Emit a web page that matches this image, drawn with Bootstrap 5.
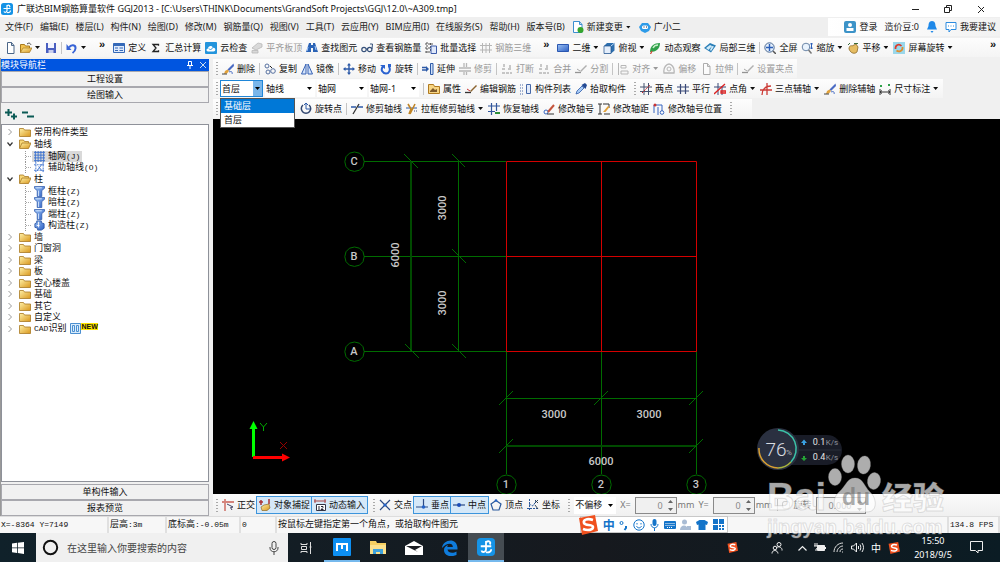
<!DOCTYPE html>
<html lang="zh-CN">
<head>
<meta charset="utf-8">
<meta name="viewport" content="width=device-width, initial-scale=1">
<title>广联达BIM钢筋算量软件 GGJ2013</title>
<link href="https://cdn.jsdelivr.net/npm/bootstrap@5.3.0/dist/css/bootstrap.min.css" rel="stylesheet">
<style>
body{font:9px/12px "Noto Sans","Noto Sans CJK SC",sans-serif;color:#111;background:#f0f0f0;overflow:hidden}
svg{flex:none;display:block}
.ico{width:12px;height:12px}
.titlebar{height:17px;background:#fff;padding:0 16px 0 1px}
.menubar{height:20px;background:#efefef;padding-left:5px;gap:7px}
.menubar a{color:#222;text-decoration:none;white-space:nowrap}
.account{background:linear-gradient(90deg,#fff,#f2f2f2);gap:7px;height:18px;padding:0 4px 0 16px}
.tool{--bs-btn-padding-x:0px;--bs-btn-padding-y:0px;--bs-btn-font-size:9px;--bs-btn-line-height:12px;--bs-btn-border-width:0px;--bs-btn-border-radius:0;--bs-btn-color:#111;display:inline-flex;align-items:center;gap:3px;white-space:nowrap;flex:none}
.tool:disabled{--bs-btn-disabled-color:#999;--bs-btn-disabled-opacity:1}
.tool:disabled svg{filter:grayscale(1);opacity:.5}
.dd::after{content:"";width:5px;height:3px;margin-right:1px;background:#111;clip-path:polygon(0 0,100% 0,50% 100%)}
.dd:disabled::after{background:#999}
.toprow{height:21px}
.strip{height:19px;display:flex;align-items:center;gap:4px;padding:0 4px;background:linear-gradient(#fdfdfd,#f4f4f4)}
.rule{width:1px;height:12px;background:#c4c4c4;flex:none}
.grip{width:2px;height:13px;background:repeating-linear-gradient(#aaa 0 1px,transparent 1px 3px);flex:none}
.more{font:bold 11px/11px "Liberation Sans",sans-serif;align-self:flex-start;padding-top:1px}
.main-top{height:20px;background:#f0f0f0}
.main-top .strip{padding-left:3px}
.main-top .rule+.tool,.main-top .combos+.rule{margin-left:0}
.combos{display:flex;gap:2px;margin-left:-2px}
.side{width:209px;flex:none;background:#f0f0f0;border-left:1px solid #999;padding-top:1px}
.side-head{background:#0055e0;color:#fff;height:12px;line-height:12px;padding-right:2px;gap:5px}
.pane-btn{--bs-btn-padding-y:0px;--bs-btn-font-size:9px;--bs-btn-line-height:14px;--bs-btn-border-radius:0;--bs-btn-border-color:#a8a8ae;--bs-btn-bg:#f1f1f1;--bs-btn-color:#111;height:16px}
.pane-tools{height:21px;padding-left:4px}
.tree{background:#fff;border:1px solid #8e9199;margin-bottom:2px}
.tree-in,.tree-in ul{list-style:none;margin:0;padding:0}
.tree-in{padding:1px 0 0 5px}
.node{display:flex;align-items:center;gap:4px;height:12px}
.node .fold{margin-left:2px;margin-right:-1px}
.tree-in>li:nth-child(n+4):nth-child(even)>.node{height:11px}
.tree-in .kids{margin-left:18px}
.kids li{display:flex;height:12px;align-items:center}
.kids li:nth-child(even){height:11px}
.kids .hit{display:flex;gap:3px;align-items:center;padding:0 2px;height:11px}
.kids .on{background:#d9d9d9}
.kids li::before{content:"";width:7px;height:11px;border-left:1px dotted #999;background:repeating-linear-gradient(90deg,#aaa 0 1px,transparent 1px 2px) 0 5px/8px 1px no-repeat}
.en{font:8px/12px "Liberation Mono",monospace}
.newtag{font:bold 7px/7px "Liberation Sans",sans-serif;background:#ffe600;align-self:flex-start;margin-left:-4px}
.combo{appearance:none;border:0;border-radius:0;height:17px;width:50px;padding:0 10px 0 1px;font:inherit;color:#111;flex:none;background:#fff url("data:image/svg+xml,%3Csvg xmlns='http://www.w3.org/2000/svg' width='5' height='3'%3E%3Cpath d='M0 0h5L2.500 3z'/%3E%3C/svg%3E") right 3px center no-repeat}
.snap-mode{width:42px}
.floor{width:43px;border:1px solid #1f86d8;background-color:#7ab6ea;background-image:url("data:image/svg+xml,%3Csvg xmlns='http://www.w3.org/2000/svg' width='43' height='17'%3E%3Cpath fill='white' d='M0 0h32v17H0z'/%3E%3Cpath d='M34 6h5l-2.500 3z'/%3E%3C/svg%3E");background-position:0 0}
.floor-box{position:relative;display:flex}
.floor-list{position:absolute;left:0;top:18px;width:75px;z-index:5;background:#fff;border:1px solid #555;list-style:none;margin:0;padding:0}
.floor-list li{height:14px;line-height:14px;padding-left:3px}
.floor-list .sel{background:#0078d7;color:#fff}
.after-list{margin-left:78px}
.work{min-width:0;margin-left:4px;padding-top:1px}
.cad{background:#000;min-height:0;position:relative}
.cad text{font:500 11px Roboto,sans-serif;fill:#c8c8c8;text-anchor:middle}
.cad .plan{position:absolute}
.snap{height:22px;display:flex;align-items:center;gap:4px;padding:0 3px;background:linear-gradient(#fbfbfb,#f0f0f0)}
.snap-set{display:flex;margin:0 -2px}
.pressed{background:#d5e8f8;outline:1px solid #3d95dc;height:16px;padding:0 2px}
.num{width:42px;height:17px;border:1px solid #8a8a8a;background:#f0f0f0;color:#888;font:inherit;text-align:right;padding:0 13px 0 0;border-radius:0}
.wide{width:50px}
.spin{position:relative;display:flex}
.spin svg{position:absolute;right:3px;top:3px}
.dim{color:#777}
.unit{margin-left:-3px}
.tick{width:8px;height:8px;margin:0}
.status{height:17px;background:#f7f7f7;font-family:"Liberation Mono","Noto Sans CJK SC",monospace;font-size:8px;border-top:1px solid #ddd}
.status>span{border-right:2px solid #e0e0e0;padding-left:1px;line-height:16px;white-space:nowrap;flex:none}
.status b{font-weight:400;font-size:9px}
.c-xy{width:109px}.c-h{width:58px}.c-b{width:74px}.c-z{width:36px}.c-f{width:51px}
.ime{position:absolute;left:58%;bottom:29px;height:17px;width:148px;background:#fff;border:1px solid #c8c8c8;padding-right:3px;z-index:3;color:#1474c9}
.ime .logo{margin-left:-3px}
.zh,.zh2{font:bold 12px/14px "Noto Sans CJK SC",sans-serif}
.zh2{font-weight:400;font-size:10px}
.task{height:29px;background:linear-gradient(90deg,#10212a,#16191e 60%,#0b1c24);color:#fff}
.task .app{--bs-btn-padding-x:0px;--bs-btn-padding-y:0px;--bs-btn-border-radius:0;--bs-btn-border-width:0px;width:36px;height:29px;display:flex;align-items:center;justify-content:center}
.search{width:252px;background:#f0f0f0;gap:8px;padding:0 9px 0 6px;flex:none}
.search input{border:0;background:none;font:10px/14px "Noto Sans CJK SC",sans-serif;min-width:0;flex:1;padding:0}
.search input::placeholder{color:#444;opacity:1}
.task .live{border-bottom:2px solid #76b9ed}
.task .now{background:#454c52}
.tray{gap:7px;padding-right:17px}
.tray-s{margin-right:26px}
.tray-p{margin-right:8px}
.clock{text-align:center;line-height:14px;width:46px;margin:0 7px 0 3px}
.gauge{position:absolute;right:157px;bottom:23px}
.gauge .big{font:300 19px Roboto,sans-serif;fill:#d8dbe0}
.gauge .pct{font:8px Roboto,sans-serif;fill:#b0b4bc}
.gauge .sm{font:8px Roboto,sans-serif;fill:#8e929c}
.gauge .sp{font:9px Roboto,sans-serif;fill:#e4e4e4}
.mark-over{position:absolute;right:50px;bottom:18px;z-index:4;pointer-events:none}
.wm{font:bold 38px "Liberation Sans",sans-serif}
.wd{font:bold 23px "Liberation Sans",sans-serif;fill:#666;fill-opacity:.55}
.wz{font:900 31px "Noto Sans CJK SC",sans-serif}
.wu{font:bold 20px "Liberation Sans",sans-serif}
</style>
</head>
<body class="d-flex flex-column vh-100">
<svg width="0" height="0" class="position-absolute" aria-hidden="true">
<defs>
<linearGradient id="gold" x2="1" y2="1"><stop stop-color="#fff1a8"/><stop offset="1" stop-color="#d9971c"/></linearGradient>
<linearGradient id="blu" x2="1" y2="1"><stop stop-color="#9cc2f4"/><stop offset="1" stop-color="#2c5fc4"/></linearGradient>
</defs>
<symbol id="app" viewBox="0 0 12 12"><rect width="12" height="12" rx="2.500" fill="#1593e6"/><path d="M6 2v5.500c0 2-2.500 2.500-3 .8M2.500 5.500h7M6 2.800c2-1.500 3.500 0 2.500 1.500M6 9.500c2 .5 3.500-.5 3.500-2" stroke="#fff" stroke-width="1.200" fill="none"/></symbol>
<symbol id="new" viewBox="0 0 12 12"><path d="M3.500.5h4l2.500 3v8H3.500z" fill="#fff" stroke="#4b6688"/><path d="M7.500.5v3H10" fill="none" stroke="#4b6688"/></symbol>
<symbol id="newg" viewBox="0 0 12 12"><path d="M1.500.5h6l2.500 3v8h-8.500z" fill="#fff" stroke="#3b8fd0"/><path d="M7.500.5v3H10" fill="none" stroke="#3b8fd0"/><circle cx="8.500" cy="9" r="3" fill="#35a62c"/></symbol>
<symbol id="open" viewBox="0 0 12 12"><path d="M.5 10.500v-8h4l1 1.500h4v2" fill="#f3c451" stroke="#a97a1c"/><path d="M.5 10.500 3 6h9l-2.500 4.500z" fill="url(#gold)" stroke="#a97a1c" stroke-width=".7"/><path d="M7 2c2-1.500 3-1 4 .8" fill="none" stroke="#444"/></symbol>
<symbol id="save" viewBox="0 0 12 12"><path d="M1 1h10v10H1z" fill="#4a5fc0"/><path d="M3 1h6v5H3z" fill="#f2f4ff"/><path d="M3.500 8h5v3h-5z" fill="#c9cfee"/></symbol>
<symbol id="undo" viewBox="0 0 12 12"><path d="M3 5.500C5 2 10 2.500 9.500 6.500 9.300 8.500 8 10 6.500 11" fill="none" stroke="#3763d6" stroke-width="2"/><path d="M.5 2v6h5z" fill="#3763d6"/></symbol>
<symbol id="form" viewBox="0 0 12 12"><path d="M.5 1.500h11v9H.5z" fill="#dfeafb" stroke="#3569b8"/><path d="M.5 1.500h11V4H.5z" fill="#3569b8"/><path d="M2 6h3M6.500 6h3.500M2 8.500h3M6.500 8.500h3.500" stroke="#3569b8"/></symbol>
<symbol id="sigma" viewBox="0 0 12 12"><path d="M8.500 3.800V2.500H3L6 6 3 9.500h5.500V8.200" fill="none" stroke="#222" stroke-width="1.300"/></symbol>
<symbol id="cloud" viewBox="0 0 12 12"><rect width="12" height="12" rx="1" fill="#2394dc"/><path d="M3 9.500c-2 0-2-3 0-3 0-3 4-3.500 5-1 3 0 3 4 .5 4z" fill="#fff"/><path d="m4 6.500 1.500 1.500L8.500 5" fill="none" stroke="#2394dc"/></symbol>
<symbol id="slab" viewBox="0 0 12 12"><path d="M1 6 7 1l4 1v3L5 8zM1 11V8.500h6V11z" fill="#bbb" stroke="#777" stroke-width=".8"/></symbol>
<symbol id="bino" viewBox="0 0 12 12"><path d="M3 1h2v2h2V1h2l3 9H7V6H5v4H0z" fill="#2b63b5"/><path d="M2 5l-1 4M9 4l1 4" stroke="#a6cbff"/></symbol>
<symbol id="glass" viewBox="0 0 12 12"><circle cx="3" cy="7.500" r="2.200" fill="none" stroke="#35507a" stroke-width="1.200"/><circle cx="8.700" cy="7.500" r="2.200" fill="none" stroke="#35507a" stroke-width="1.200"/><path d="M5 7h2M11 7l.5-5H9" stroke="#35507a" fill="none"/></symbol>
<symbol id="batch" viewBox="0 0 12 12"><path d="M2 0v12M0 2h9M5.500 1v9M0 6h6M0 10h6" stroke="#555" stroke-dasharray="2 1"/><path d="M6 4h5.500v7.500H6z" fill="#dfe8fa" stroke="#3c5ba8"/></symbol>
<symbol id="grid3" viewBox="0 0 12 12"><path d="M2.500 1v10M6 1v10M9.500 1v10M0 3.500h12M0 8h12" stroke="#777" fill="none"/></symbol>
<symbol id="rect2" viewBox="0 0 12 12"><path d="M.5 2.500h11v7H.5z" fill="url(#blu)" stroke="#2a56b0"/></symbol>
<symbol id="cube" viewBox="0 0 12 12"><path d="M1 4 4 1h7.500v7.500L8 11.500H1z" fill="#2e6fae"/><path d="M1 4h7v7.500H1z" fill="#e4eefb" stroke="#1e4f8a" stroke-width=".7"/><path d="m8 4 3.500-3" stroke="#bcd8f5"/></symbol>
<symbol id="orbit" viewBox="0 0 12 12"><path d="M1 10C1 4 5 1 11 1c0 6-4 9-10 9" fill="#2fa04a"/><path d="M4 6c1-2 3-3 5-3" stroke="#c5f3c9" stroke-width="1.500"/><path d="m3 9-1.500 3" stroke="#c43" stroke-width="1.300"/></symbol>
<symbol id="part3" viewBox="0 0 12 12"><path d="m0 6 6-5 6 2.500-5 7z" fill="#2b7fb8"/><path d="m2 6 4-3 2 1-3.500 4zM8 4l2 .5L7 9l-1-1z" fill="#d2ecfa"/></symbol>
<symbol id="full" viewBox="0 0 12 12"><circle cx="5.500" cy="5.500" r="4.700" fill="#e3eefb" stroke="#4c6a92"/><path d="M5.500 2v7M2 5.500h7" stroke="#2b5fb8" stroke-width="1.400"/><path d="m9 9 3 3" stroke="#555" stroke-width="1.500"/></symbol>
<symbol id="zoomi" viewBox="0 0 12 12"><circle cx="5" cy="5" r="3.800" fill="#e9f3fd" stroke="#6d87a8"/><path d="m7.500 8 3 3.500" stroke="#777" stroke-width="1.500"/><path d="M10.500 1v6M9 2.500 10.500 1 12 2.500M9 5.500l1.500 1.500L12 5.500" stroke="#2b5fb8" fill="none"/></symbol>
<symbol id="pan" viewBox="0 0 12 12"><path d="M2 7c0-3 2-4 3-3l4-2 2 3-1 5c-2 2-6 2-8-3" fill="#e6bd63" stroke="#8c6a28" stroke-width=".8"/><path d="M7 1.500h4M1 3l2-2" stroke="#3a6b3c"/></symbol>
<symbol id="turn" viewBox="0 0 12 12"><rect width="12" height="12" fill="#9ad7ea"/><path d="M2.500 7C2 3 6 1.500 8.500 4" fill="none" stroke="#dc3b2b" stroke-width="1.700"/><path d="M9.500 5C10 9 6 10.500 3.500 8.500" fill="none" stroke="#e08c2a" stroke-width="1.700"/></symbol>
<symbol id="erase" viewBox="0 0 12 12"><path d="m11.500.5-6 6 1.500 1.500 5-5z" fill="#4a6bc4"/><path d="m5.500 6.500 1.500 1.500-2 2.500-3 .5 1-3z" fill="#e2a23a"/><path d="M0 11h5" stroke="#444"/><path d="M7 9c2-1 4 0 3 2" fill="none" stroke="#3a62c0"/></symbol>
<symbol id="copy" viewBox="0 0 12 12"><circle cx="3" cy="3" r="2" fill="none" stroke="#5670a0"/><circle cx="4" cy="9" r="2" fill="none" stroke="#5670a0"/><circle cx="9" cy="8" r="2.300" fill="none" stroke="#5670a0"/><path d="m6 3 2 2" stroke="#222"/></symbol>
<symbol id="mirror" viewBox="0 0 12 12"><path d="M5 1v10H.5zM7 1v10h4.500z" fill="#d5e4fa" stroke="#3561b4"/></symbol>
<symbol id="move" viewBox="0 0 12 12"><path d="M6 1v10M1 6h10" stroke="#2d5aa8" stroke-width="1.400"/><path d="m6 0 2 2.500H4zM6 12l2-2.500H4zM0 6l2.500-2v4zM12 6 9.500 4v4z" fill="#2d5aa8"/></symbol>
<symbol id="rot" viewBox="0 0 12 12"><path d="M3 3.500C0 7 3 10.500 6 10.500S11 7 9 3.500" fill="none" stroke="#2a62d0" stroke-width="2"/><path d="M0 2h5v4zM8 1h3v3H8z" fill="#2a62d0"/></symbol>
<symbol id="extend" viewBox="0 0 12 12"><path d="M0 4.500h4M0 7h4" stroke="#2d5aa8" stroke-width="1.500"/><path d="m4 3 3 3-3 3z" fill="#2d5aa8"/><path d="M8.500.5h2.500v11H8.500z" fill="#cfe0f8" stroke="#2d5aa8"/></symbol>
<symbol id="cut" viewBox="0 0 12 12"><path d="M0 5h12M0 8h12M5 0v4M7.500 0v4M5 9v3M7.500 9v3" stroke="#777" stroke-width="1.300"/></symbol>
<symbol id="brk" viewBox="0 0 12 12"><path d="M1 6h4M7 6h4M1 10h10M3 1v4M9 2v3" stroke="#777" stroke-width="1.500" stroke-dasharray="3 1"/></symbol>
<symbol id="pen" viewBox="0 0 12 12"><path d="M0 9.500h6" stroke="#333" stroke-width="1.300"/><path d="m5 8 6-6 1 1-6 6z" fill="#8c6530"/><path d="m2 6 3 2" stroke="#c33"/></symbol>
<symbol id="align" viewBox="0 0 12 12"><path d="M1.500 0v12M4 2.500h5V5H4zM4 8h7v3H4z" stroke="#777" fill="none"/></symbol>
<symbol id="offset" viewBox="0 0 12 12"><circle cx="6" cy="6" r="2" fill="none" stroke="#777"/><path d="M1 10C0 4 4 1 6 1s6 3 5 9z" fill="none" stroke="#777" stroke-width="1.300"/></symbol>
<symbol id="prop" viewBox="0 0 12 12"><path d="M.5 1.500h5l1 2h5v7H.5z" fill="#f7d583" stroke="#b07a20"/><path d="m2 8 3-3 2 2 2-1v3H2z" fill="#7e5a2a"/></symbol>
<symbol id="list" viewBox="0 0 12 12"><path d="M0 2h4M0 5h4M0 8h4M0 11h4" stroke="#4668a8" stroke-dasharray="1 1"/><path d="M6.500 1.500h4v9h-4z" fill="#e2ebfa" stroke="#4668a8"/></symbol>
<symbol id="pick" viewBox="0 0 12 12"><path d="m1 11 1-3 5-5 2 2-5 5z" fill="#a9cdf7" stroke="#2d5aa8" stroke-width=".8"/><path d="m6.500 2 4 4 1.500-4L10 0z" fill="#234a94"/></symbol>
<symbol id="twop" viewBox="0 0 12 12"><path d="M4 0v12M8.500 0v12M0 4h12M0 8.500h12" stroke="#45526e"/><path d="m2 10 8-8" stroke="#c22" stroke-dasharray="2 1"/></symbol>
<symbol id="para" viewBox="0 0 12 12"><path d="M3.500 1v10M8.500 1v10M0 4h12M0 8h12" stroke="#3b4a78" stroke-width="1.200"/></symbol>
<symbol id="angle" viewBox="0 0 12 12"><path d="M4 0v12M0 4h12M8 3v9" stroke="#3b4a78"/><path d="m0 11 11-10M7 8h5v2H7z" stroke="#d22" stroke-width="1.300" fill="none"/></symbol>
<symbol id="arc" viewBox="0 0 12 12"><path d="M2 12C2 7 5 3 11 3M0 7h12M7 0v12" stroke="#cc3b36" stroke-width="1.300" fill="none"/></symbol>
<symbol id="dimn" viewBox="0 0 12 12"><path d="M1 6v6M11 6v6M1 9h10M3 7.500 1 9l2 1.500M9 7.500 11 9l-2 1.500" stroke="#333" fill="none"/><path d="M1 2h2v2H1zM9 1h2v2H9z" fill="#2fa04a"/></symbol>
<symbol id="rpt" viewBox="0 0 12 12"><path d="M3 2a4.700 4.700 0 1 0 6 0" fill="none" stroke="#31466f" stroke-width="1.500"/><path d="M6 0v6M4 2l2-2 2 2M6 6h4" stroke="#2d5aa8" fill="none"/></symbol>
<symbol id="trim" viewBox="0 0 12 12"><path d="M0 4h5M7 4h5" stroke="#2d5aa8" stroke-width="1.500"/><path d="M8 1 2 11" stroke="#333" stroke-width="1.300"/></symbol>
<symbol id="box" viewBox="0 0 12 12"><path d="M0 5h11" stroke="#2d5aa8"/><path d="m2 1 3 5-2 5M9 1 4 11" stroke="#c08424" stroke-width="1.600" fill="none"/><path d="M8 8h4" stroke="#3b4a78" stroke-dasharray="1 1"/></symbol>
<symbol id="rest" viewBox="0 0 12 12"><path d="M3.500 0v12M8.500 0v8M0 3h12M0 8.500h7" stroke="#31569c" stroke-width="1.200"/><path d="M7 9h5v2H7z" fill="#2d8f3b"/></symbol>
<symbol id="num" viewBox="0 0 12 12"><circle cx="3" cy="9" r="2" fill="none" stroke="#3765c0"/><path d="m5 9 6-7" stroke="#c4543b" stroke-width="2"/><path d="M4 11h7" stroke="#333"/></symbol>
<symbol id="dist" viewBox="0 0 12 12"><path d="M2 1v10M0 1h4M0 11h4M5 1h6v4M6 11h6" stroke="#333" fill="none"/><path d="m5 9 5-6 1.500 1-4 5z" fill="#e2a23a"/></symbol>
<symbol id="pos" viewBox="0 0 12 12"><path d="M1 10V2h8v8M5 4v8" stroke="#3765c0" fill="none"/><circle cx="9" cy="9.500" r="1.800" fill="#fff" stroke="#3765c0"/><circle cx="2" cy="2" r="1.500" fill="#c33"/></symbol>
<symbol id="folder" viewBox="0 0 12 10"><path d="M.5 1.500h4l1 1.500h6v6.500H.5z" fill="url(#gold)" stroke="#a87822" stroke-width=".8"/></symbol>
<symbol id="folderO" viewBox="0 0 12 10"><path d="M.5 9V1h4l1 1.500h4V4" fill="#f8d878" stroke="#a87822" stroke-width=".8"/><path d="M.5 9.500 3 4h9L9.500 9.500z" fill="url(#gold)" stroke="#a87822" stroke-width=".8"/></symbol>
<symbol id="mesh" viewBox="0 0 12 12"><path d="M1.500 0v12M4.500 0v12M7.500 0v12M10.500 0v12M0 1.500h12M0 4.500h12M0 7.500h12M0 10.500h12" stroke="#3c72cf"/></symbol>
<symbol id="aux" viewBox="0 0 12 12"><path d="M2 0v12M0 3h12M0 9h12M10 0v12" stroke="#3c72cf" stroke-dasharray="2 1"/><path d="m3 10 6-8M5 5l4 5" stroke="#3c72cf"/></symbol>
<symbol id="col" viewBox="0 0 12 12"><path d="M.5.5h11v2L8.500 5v6.500h-5V5l-3-2.500z" fill="url(#blu)" stroke="#2a56a8" stroke-width=".8"/><path d="M2.500 2h6M5 5v6" stroke="#dcecff"/></symbol>
<symbol id="col2" viewBox="0 0 12 12"><path d="M3 1h5v2l3 1v5L8 11H4V9L1 8V4l2-1z" fill="url(#blu)" stroke="#2a56a8"/><path d="M5 2v6M3 6h3" stroke="#fff"/></symbol>
<symbol id="right" viewBox="0 0 6 8"><path d="m1.500 1 3 3-3 3" fill="none" stroke="#999"/></symbol>
<symbol id="down" viewBox="0 0 6 8"><path d="m.5 2.500 2.500 3 2.500-3" fill="none" stroke="#333" stroke-width="1.200"/></symbol>
<symbol id="ortho" viewBox="0 0 12 12"><path d="M3 12V3h9M0 3h3M3 0v3" stroke="#d4847c" stroke-width="1.800" fill="none"/><path d="m5 5 6 3-2.500.6L10 11" stroke="#446" fill="none"/></symbol>
<symbol id="osnap" viewBox="0 0 12 12"><path d="M0 3h4M2 1v5M10 0v5" stroke="#a33" stroke-width="1.500"/><path d="M2 8 5 6l5-1 1 4-3 2.500H3z" fill="url(#gold)" stroke="#8c6a28" stroke-width=".7"/></symbol>
<symbol id="dyn" viewBox="0 0 12 12"><path d="M0 2h12M1 0v4M11 0v4" stroke="#a44"/><path d="M2.500 5.500h9v6h-9z" fill="#fff" stroke="#334"/><path d="M5 7v4M7 7.500h2v1L7 10.500h2.500" stroke="#223" fill="none"/></symbol>
<symbol id="cross" viewBox="0 0 12 12"><path d="m1 1 10 10M11 1 1 11" stroke="#2b4a85" stroke-width="1.200"/><circle cx="6" cy="6" r="1.600" fill="#2463c8"/></symbol>
<symbol id="perp" viewBox="0 0 12 12"><path d="M0 8h12M7.500 0v8" stroke="#2b4a85" stroke-width="1.200"/><circle cx="7.500" cy="8" r="1.800" fill="#2463c8"/></symbol>
<symbol id="mid" viewBox="0 0 12 12"><path d="M0 6h12" stroke="#2b4a85" stroke-width="1.200"/><circle cx="6" cy="6" r="2" fill="#1a4cb8"/></symbol>
<symbol id="vert" viewBox="0 0 12 12"><path d="M6 1.500 11 5 9 11H3L1 5z" fill="none" stroke="#2b5a9d" stroke-width="1.200"/><circle cx="6" cy="1.500" r="1.300" fill="#2463c8"/></symbol>
<symbol id="coord" viewBox="0 0 12 12"><path d="M2.500 0v12M0 9.500h12M2 5l4 2 3-5" stroke="#2b5a9d" fill="none" stroke-dasharray="2 1"/><path d="m8 1 3 3M11 1 8 4M8 6l3 4" stroke="#345"/></symbol>
<symbol id="sogou" viewBox="0 0 20 20"><path d="m1 3 16-3 3 16-16 4z" fill="#f0501e"/><path d="M15 5C9 3 5 5 6 8s9 1 9 4-5 4-10 2" fill="none" stroke="#fff" stroke-width="2.600"/></symbol>
<symbol id="updown" viewBox="0 0 6 11"><path d="M0 3h5L2.500 0zM0 8h5l-2.500 3z" fill="#666"/></symbol>
</svg>

<header class="titlebar d-flex align-items-center">
  <svg class="ico me-1"><use href="#app"/></svg>
  <span class="text-nowrap">广联达BIM钢筋算量软件 GGJ2013 - [C:\Users\THINK\Documents\GrandSoft Projects\GGJ\12.0\~A309.tmp]</span>
  <svg class="ms-auto" width="76" height="12" fill="none" stroke="#222"><path d="M4 6.500h7M36.500 4.500h5v5h-5zM38.500 4.500v-2h5v5h-2M70 3l7 7M77 3l-7 7"/></svg>
</header>

<nav class="menubar d-flex align-items-center">
  <a href="#">文件(F)</a><a href="#">编辑(E)</a><a href="#">楼层(L)</a><a href="#">构件(N)</a><a href="#">绘图(D)</a><a href="#">修改(M)</a><a href="#">钢筋量(Q)</a><a href="#">视图(V)</a><a href="#">工具(T)</a><a href="#">云应用(Y)</a><a href="#">BIM应用(I)</a><a href="#">在线服务(S)</a><a href="#">帮助(H)</a><a href="#">版本号(B)</a>
  <button class="btn tool dd"><svg class="ico"><use href="#newg"/></svg>新建变更</button>
  <button class="btn tool"><svg class="ico" viewBox="0 0 12 12"><path d="M3 2h6l3 4-2 4-4 2-4-2-2-4z" fill="#2e9be8"/><rect x="3" y="4.500" width="6" height="3.500" rx="1.500" fill="#fff"/><path d="M4.500 6h1M7 6h1" stroke="#124"/></svg>广小二</button>
  <div class="account d-flex align-items-center ms-auto">
    <button class="btn tool"><svg class="ico" viewBox="0 0 12 12"><rect width="12" height="12" rx="2" fill="#3c93c8"/><circle cx="6" cy="4" r="2" fill="#fff"/><path d="M2.500 10V7h7v3z" fill="#fff"/></svg>登录</button>
    <a href="#">造价豆:0</a>
    <button class="btn tool" aria-label="通知"><svg class="ico" viewBox="0 0 12 12"><path d="M6 0c3 0 3.500 3 3.500 5L11 8.500H1L2.500 5C2.500 3 3 0 6 0M4.500 10h3L6 12z" fill="#1e88e8"/></svg></button>
    <button class="btn tool"><svg class="ico" viewBox="0 0 12 12"><path d="M1 1.500h10v7H6l-2 2.500V8.500H1z" fill="#fff" stroke="#2b8be0"/><path d="M3 5h1M5.500 5h1M8 5h1" stroke="#2b8be0"/></svg>我要建议</button>
  </div>
</nav>

<div class="toprow d-flex align-items-center">
  <div class="strip">
    <button class="btn tool" aria-label="新建"><svg class="ico"><use href="#new"/></svg></button>
    <button class="btn tool dd" aria-label="打开"><svg class="ico"><use href="#open"/></svg></button>
    <button class="btn tool" aria-label="保存"><svg class="ico"><use href="#save"/></svg></button>
    <span class="rule"></span>
    <button class="btn tool dd" aria-label="撤销"><svg class="ico"><use href="#undo"/></svg></button>
    <span class="more ms-2">»</span>
  </div>
  <div class="strip">
    <button class="btn tool"><svg class="ico"><use href="#form"/></svg>定义</button>
    <button class="btn tool"><svg class="ico"><use href="#sigma"/></svg>汇总计算</button>
    <button class="btn tool"><svg class="ico"><use href="#cloud"/></svg>云检查</button>
    <button class="btn tool" disabled><svg class="ico"><use href="#slab"/></svg>平齐板顶</button>
    <button class="btn tool"><svg class="ico"><use href="#bino"/></svg>查找图元</button>
    <button class="btn tool"><svg class="ico"><use href="#glass"/></svg>查看钢筋量</button>
    <button class="btn tool"><svg class="ico"><use href="#batch"/></svg>批量选择</button>
    <button class="btn tool" disabled><svg class="ico"><use href="#grid3"/></svg>钢筋三维</button>
    <span class="more ms-2">»</span>
  </div>
  <div class="strip flex-grow-1">
    <button class="btn tool dd"><svg class="ico"><use href="#rect2"/></svg>二维</button>
    <button class="btn tool dd"><svg class="ico"><use href="#cube"/></svg>俯视</button>
    <button class="btn tool"><svg class="ico"><use href="#orbit"/></svg>动态观察</button>
    <button class="btn tool"><svg class="ico"><use href="#part3"/></svg>局部三维</button>
    <span class="rule"></span>
    <button class="btn tool"><svg class="ico"><use href="#full"/></svg>全屏</button>
    <button class="btn tool dd"><svg class="ico"><use href="#zoomi"/></svg>缩放</button>
    <button class="btn tool dd"><svg class="ico"><use href="#pan"/></svg>平移</button>
    <button class="btn tool dd"><svg class="ico"><use href="#turn"/></svg>屏幕旋转</button>
    <span class="more ms-auto">»</span>
  </div>
</div>

<div class="d-flex flex-grow-1 overflow-hidden">
  <aside class="side d-flex flex-column">
    <div class="side-head d-flex align-items-center"><span class="me-auto">模块导航栏</span>
      <svg width="8" height="8" fill="none" stroke="#fff"><path d="M2.500.5h3v4h-3zM1 4.500h6M4 5v3"/></svg>
      <svg width="8" height="8" stroke="#cde"><path d="m1 1 6 6M7 1 1 7"/></svg></div>
    <button class="btn pane-btn">工程设置</button>
    <button class="btn pane-btn">绘图输入</button>
    <div class="pane-tools d-flex align-items-center"><svg width="30" height="14" stroke="#0b5a55" stroke-width="2"><path d="M0 5.500h7M3.500 2v7M6 9.500h6M9 6.500v6M17 5.500h6M22 9.500h7"/></svg></div>
    <div class="tree flex-grow-1">
      <ul class="tree-in">
        <li><div class="node"><svg width="6" height="8"><use href="#right"/></svg><svg class="fold" width="12" height="10"><use href="#folder"/></svg>常用构件类型</div></li>
        <li><div class="node"><svg width="6" height="8"><use href="#down"/></svg><svg class="fold" width="12" height="10"><use href="#folderO"/></svg>轴线</div>
          <ul class="kids"><li><span class="hit on"><svg width="11" height="11"><use href="#mesh"/></svg><span>轴网<span class="en">(J)</span></span></span></li><li><span class="hit"><svg width="11" height="11"><use href="#aux"/></svg><span>辅助轴线<span class="en">(O)</span></span></span></li></ul></li>
        <li><div class="node"><svg width="6" height="8"><use href="#down"/></svg><svg class="fold" width="12" height="10"><use href="#folderO"/></svg>柱</div>
          <ul class="kids"><li><span class="hit"><svg width="11" height="11"><use href="#col"/></svg><span>框柱<span class="en">(Z)</span></span></span></li><li><span class="hit"><svg width="11" height="11"><use href="#col"/></svg><span>暗柱<span class="en">(Z)</span></span></span></li><li><span class="hit"><svg width="11" height="11"><use href="#col"/></svg><span>端柱<span class="en">(Z)</span></span></span></li><li><span class="hit"><svg width="11" height="11"><use href="#col2"/></svg><span>构造柱<span class="en">(Z)</span></span></span></li></ul></li>
        <li><div class="node"><svg width="6" height="8"><use href="#right"/></svg><svg class="fold" width="12" height="10"><use href="#folder"/></svg>墙</div></li>
        <li><div class="node"><svg width="6" height="8"><use href="#right"/></svg><svg class="fold" width="12" height="10"><use href="#folder"/></svg>门窗洞</div></li>
        <li><div class="node"><svg width="6" height="8"><use href="#right"/></svg><svg class="fold" width="12" height="10"><use href="#folder"/></svg>梁</div></li>
        <li><div class="node"><svg width="6" height="8"><use href="#right"/></svg><svg class="fold" width="12" height="10"><use href="#folder"/></svg>板</div></li>
        <li><div class="node"><svg width="6" height="8"><use href="#right"/></svg><svg class="fold" width="12" height="10"><use href="#folder"/></svg>空心楼盖</div></li>
        <li><div class="node"><svg width="6" height="8"><use href="#right"/></svg><svg class="fold" width="12" height="10"><use href="#folder"/></svg>基础</div></li>
        <li><div class="node"><svg width="6" height="8"><use href="#right"/></svg><svg class="fold" width="12" height="10"><use href="#folder"/></svg>其它</div></li>
        <li><div class="node"><svg width="6" height="8"><use href="#right"/></svg><svg class="fold" width="12" height="10"><use href="#folder"/></svg>自定义</div></li>
        <li><div class="node"><svg width="6" height="8"><use href="#right"/></svg><svg class="fold" width="12" height="10"><use href="#folder"/></svg><span><span class="en">CAD</span>识别</span><svg width="11" height="11" fill="#d9ecfb" stroke="#4b8fd0"><path d="M.5.500h10v10H.5zM2.500 2.500h2v6h-2zM6.500 2.500h2v6h-2z"/></svg><span class="newtag">NEW</span></div></li>
      </ul>
    </div>
    <button class="btn pane-btn">单构件输入</button>
    <button class="btn pane-btn">报表预览</button>
  </aside>

  <main class="work d-flex flex-column flex-grow-1">
    <div class="main-top d-flex"><div class="strip">
      <span class="grip"></span>
      <button class="btn tool"><svg class="ico"><use href="#erase"/></svg>删除</button><span class="rule"></span>
      <button class="btn tool"><svg class="ico"><use href="#copy"/></svg>复制</button>
      <button class="btn tool"><svg class="ico"><use href="#mirror"/></svg>镜像</button><span class="rule"></span>
      <button class="btn tool"><svg class="ico"><use href="#move"/></svg>移动</button>
      <button class="btn tool"><svg class="ico"><use href="#rot"/></svg>旋转</button><span class="rule"></span>
      <button class="btn tool"><svg class="ico"><use href="#extend"/></svg>延伸</button>
      <button class="btn tool" disabled><svg class="ico"><use href="#cut"/></svg>修剪</button><span class="rule"></span>
      <button class="btn tool" disabled><svg class="ico"><use href="#brk"/></svg>打断</button>
      <button class="btn tool" disabled><svg class="ico"><use href="#brk"/></svg>合并</button>
      <button class="btn tool" disabled><svg class="ico"><use href="#pen"/></svg>分割</button><span class="rule"></span>
      <button class="btn tool dd" disabled><svg class="ico"><use href="#align"/></svg>对齐</button>
      <button class="btn tool" disabled><svg class="ico"><use href="#offset"/></svg>偏移</button>
      <button class="btn tool" disabled><svg class="ico"><use href="#new"/></svg>拉伸</button><span class="rule"></span>
      <button class="btn tool" disabled><svg class="ico"><use href="#pen"/></svg>设置夹点</button>
    </div></div>
    <div class="main-top d-flex"><div class="strip">
      <span class="grip"></span>
      <div class="combos">
        <div class="floor-box">
          <select class="combo floor" aria-label="楼层"><option>首层</option><option>基础层</option></select>
          <ul class="floor-list"><li class="sel">基础层</li><li>首层</li></ul>
        </div>
        <select class="combo" aria-label="构件大类"><option>轴线</option></select>
        <select class="combo" aria-label="构件类型"><option>轴网</option></select>
        <select class="combo" aria-label="构件"><option>轴网-1</option></select>
      </div>
      <span class="rule"></span>
      <button class="btn tool"><svg class="ico"><use href="#prop"/></svg>属性</button>
      <button class="btn tool"><svg class="ico"><use href="#pen"/></svg>编辑钢筋</button>
      <button class="btn tool"><svg class="ico"><use href="#list"/></svg>构件列表</button>
      <button class="btn tool"><svg class="ico"><use href="#pick"/></svg>拾取构件</button>
      <span class="grip ms-1"></span>
      <button class="btn tool"><svg class="ico"><use href="#twop"/></svg>两点</button>
      <button class="btn tool"><svg class="ico"><use href="#para"/></svg>平行</button>
      <button class="btn tool dd"><svg class="ico"><use href="#angle"/></svg>点角</button>
      <button class="btn tool dd"><svg class="ico"><use href="#arc"/></svg>三点辅轴</button>
      <button class="btn tool"><svg class="ico"><use href="#erase"/></svg>删除辅轴</button>
      <button class="btn tool dd"><svg class="ico"><use href="#dimn"/></svg>尺寸标注</button>
    </div></div>
    <div class="main-top d-flex"><div class="strip">
      <span class="grip"></span>
      <button class="btn tool after-list"><svg class="ico"><use href="#rpt"/></svg>旋转点</button><span class="rule"></span>
      <button class="btn tool"><svg class="ico"><use href="#trim"/></svg>修剪轴线</button>
      <button class="btn tool dd"><svg class="ico"><use href="#box"/></svg>拉框修剪轴线</button>
      <button class="btn tool"><svg class="ico"><use href="#rest"/></svg>恢复轴线</button>
      <button class="btn tool"><svg class="ico"><use href="#num"/></svg>修改轴号</button>
      <button class="btn tool"><svg class="ico"><use href="#dist"/></svg>修改轴距</button>
      <button class="btn tool"><svg class="ico"><use href="#pos"/></svg>修改轴号位置</button>
      <span class="grip ms-1 me-3"></span>
    </div></div>

    <section class="cad flex-grow-1">
      <svg class="plan" width="100%" height="100%" fill="none">
        <g stroke="#006c00">
          <path d="M151 42.500h142M151 137.500h142M151 232.500h142M245.500 42v190M293.500 232v123M388.500 232v123M483.500 232v123M293 279.500h190"/>
          <path d="M198 42v190M293 327h190" stroke="#004a00" stroke-width="2"/>
          <path d="m191 35 14 14M239 35l13 13M239 130l14 14M192 225l14 14M239 225l14 14M286 286l14-14M381 286l14-14M476 286l14-14M286 334l14-14M476 334l14-14"/>
          <path id="bub" d="m141.500 33 5 1.200 3.500 3.500 1.200 5-1.200 5-3.500 3.500-5 1.200-5-1.200-3.500-3.500-1.200-5 1.200-5 3.500-3.500z"/><use href="#bub" y="95"/><use href="#bub" y="190"/><use href="#bub" x="152" y="323"/><use href="#bub" x="247" y="323"/><use href="#bub" x="342" y="323"/>
        </g>
        <path d="M293.500 42.500h190v190h-190zM388.500 42v190M293 137.500h190" stroke="#d40000"/>
        <text x="141" y="46">C</text><text x="141" y="141">B</text><text x="141" y="236">A</text>
        <text x="293" y="369">1</text><text x="388" y="369">2</text><text x="483" y="369">3</text>
        <text x="341" y="299">3000</text><text x="436" y="299">3000</text><text x="388" y="346">6000</text>
        <text transform="translate(233 89) rotate(-90)">3000</text><text transform="translate(233 184) rotate(-90)">3000</text><text transform="translate(186 136) rotate(-90)">6000</text>
        <path d="M40.500 338V308" stroke="#0f0" stroke-width="3"/><path d="m40.500 302 4 8h-8z" fill="#0f0"/>
        <path d="M40 338.500h30" stroke="red" stroke-width="3"/><path d="m77 338.500-8-4v8z" fill="red"/>
        <path d="m47 304 3.500 4 3.500-4M50.500 308v4" stroke="#0a0"/><path d="m67 323 7 7M74 323l-7 7" stroke="#900"/>
      </svg>
      <svg class="gauge" width="87" height="44">
        <rect x="20" y="8" width="66" height="30" rx="15" fill="#191c27"/><path d="M40 23h45" stroke="#2a2e3a"/>
        <circle cx="22" cy="22" r="21" fill="#2a3040"/>
        <path d="M22 3a19 19 0 0 1 13 32" fill="none" stroke="#3cc2a8" stroke-width="1.500"/><path d="M35 35A19 19 0 0 1 22 41" stroke="#a9b43c" fill="none" stroke-width="1.500"/><path d="M22 41A19 19 0 0 1 3 21" stroke="#d9a032" stroke-width="1.500" fill="none"/>
        <text x="20" y="29" class="big">76</text><text x="33" y="28" class="pct">%</text>
        <path d="M48 12.500 51 16h-2v2h-2v-2h-2z" fill="#3aa0e0"/><path d="M48 34l3-3h-2v-2h-2v2h-2z" fill="#25a335"/>
        <text x="63" y="18" class="sp">0.1</text><text x="76" y="18" class="sm">K/s</text>
        <text x="63" y="33" class="sp">0.4</text><text x="76" y="33" class="sm">K/s</text>
      </svg>
    </section>

    <div class="snap">
      <span class="grip"></span>
      <button class="btn tool"><svg class="ico"><use href="#ortho"/></svg>正交</button>
      <div class="snap-set"><button class="btn tool pressed"><svg class="ico"><use href="#osnap"/></svg>对象捕捉</button><button class="btn tool pressed"><svg class="ico"><use href="#dyn"/></svg>动态输入</button></div>
      <span class="grip ms-1"></span>
      <button class="btn tool"><svg class="ico"><use href="#cross"/></svg>交点</button>
      <div class="snap-set"><button class="btn tool pressed"><svg class="ico"><use href="#perp"/></svg>垂点</button><button class="btn tool pressed"><svg class="ico"><use href="#mid"/></svg>中点</button></div>
      <button class="btn tool"><svg class="ico"><use href="#vert"/></svg>顶点</button>
      <button class="btn tool"><svg class="ico"><use href="#coord"/></svg>坐标</button>
      <span class="grip ms-1"></span>
      <select class="combo snap-mode" aria-label="偏移方式"><option>不偏移</option></select>
      <label class="dim" for="dx">X=</label><span class="spin"><input class="num" id="dx" value="0" disabled><svg width="6" height="11"><use href="#updown"/></svg></span><span class="dim unit">mm</span>
      <label class="dim" for="dy">Y=</label><span class="spin"><input class="num" id="dy" value="0" disabled><svg width="6" height="11"><use href="#updown"/></svg></span><span class="dim unit">mm</span>
      <span class="rule"></span><input type="checkbox" id="rt" class="tick" disabled><label class="dim" for="rt">旋转</label><span class="spin"><input class="num wide" aria-label="角度" value="0.000" disabled><svg width="6" height="11"><use href="#updown"/></svg></span>
    </div>
  </main>
</div>

<div class="status d-flex">
  <span class="c-xy">X=-8364 Y=7149</span><span class="c-h"><b>层高</b>:3m</span><span class="c-b"><b>底标高</b>:-0.05m</span><span class="c-z">0</span><span class="flex-grow-1"><b>按鼠标左键指定第一个角点，或拾取构件图元</b></span><span class="c-f">134.8 FPS</span>
</div>
<div class="ime d-flex align-items-center justify-content-between">
  <svg class="logo" width="20" height="20"><use href="#sogou"/></svg><strong class="zh">中</strong>
  <svg width="9" height="12" fill="none" stroke="#1474c9"><circle cx="2.500" cy="4" r="1.500"/><path d="M7 7v2l-1.500 2" stroke-width="2"/></svg>
  <svg class="ico" fill="none" stroke="#1474c9"><circle cx="6" cy="6" r="5.200"/><path d="M3.500 7c1 2.500 4 2.500 5 0M4 4v1.500M8 4v1.500"/></svg>
  <svg width="9" height="12"><rect x="2.500" width="4" height="7" rx="2" fill="#1474c9"/><path d="M1 5c0 5 7 5 7 0M4.500 9v3" fill="none" stroke="#1474c9"/></svg>
  <svg class="ico"><rect y="2" width="12" height="8" rx="1" fill="#1474c9"/><path d="M1.500 4.500h9M1.500 6.500h9M3 8.500h6" stroke="#fff" stroke-dasharray="1 1"/></svg>
  <svg width="11" height="12" fill="#a9bcd4"><circle cx="4.500" cy="3" r="2.500"/><path d="M0 11c0-6 8-6 8 0zM7 7h4v4H7z"/></svg>
  <svg class="ico" fill="#1474c9"><path d="M0 3 3.500 1h5L12 3l-1 3-1.500-.5V11h-7V5.500L1 6z"/></svg>
  <svg width="11" height="11" fill="#1474c9"><path d="M0 0h5v5H0zM6 0h5v5H6zM0 6h5v5H0zM6 6h2v2H6zM9 6h2v2H9zM6 9h2v2H6zM9 9h2v2H9z"/></svg>
</div>

<footer class="task d-flex align-items-center">
  <button class="btn app" aria-label="开始"><svg class="ico" fill="#fff"><path d="M0 1.500 5 .8v4.700H0zM5.800.7 12 0v5.500H5.800zM0 6.300h5V11L0 10.300zM5.800 6.300H12V12l-6.200-.9z"/></svg></button>
  <div class="search d-flex align-items-center align-self-stretch">
    <svg width="17" height="17"><circle cx="8.500" cy="8.500" r="6.700" fill="none" stroke="#111" stroke-width="2"/></svg>
    <input type="text" placeholder="在这里输入你要搜索的内容" aria-label="搜索">
    <svg width="10" height="14" fill="none" stroke="#444"><rect x="3" y=".5" width="4" height="8" rx="2"/><path d="M1 6v1c0 5 8 5 8 0V6M5 11v3"/></svg>
  </div>
  <button class="btn app" aria-label="任务视图"><svg class="ico" fill="none" stroke="#ddd"><path d="M1 1v1.500h6V1M1.500 4.500h5v3h-5zM1 11V9.500h6V11M10.500 0v12M9.500 5h2"/></svg></button>
  <button class="btn app live" aria-label="浏览器"><svg width="18" height="18"><rect width="18" height="18" rx="1" fill="#0d8ff2"/><path d="M4 13V6h10v7M9 6v5" fill="none" stroke="#fff" stroke-width="2"/></svg></button>
  <button class="btn app" aria-label="文件资源管理器"><svg width="16" height="15"><path d="M0 1h6l1 2h9v11H0z" fill="#f5cf61"/><path d="M0 5h16v9H0z" fill="#fbe18d"/><path d="M3 14V9h10v5h-3v-2H6v2z" fill="#3fa2dc"/></svg></button>
  <button class="btn app" aria-label="邮件"><svg width="18" height="14"><path d="M0 5 9 0l9 5v9H0z" fill="#fff"/><path d="M1 5h16l-7 4 3 2z" fill="#1a1d22"/></svg></button>
  <button class="btn app" aria-label="Edge"><svg width="16" height="16"><path d="M0 8C1-1 15-3 15.500 8v1.500H5.500c.5 4 6 4 9 2v3.500C9 17.500 2 16 2 10c0-3 2-4 4-5-.5 1-.7 1.500-.7 2h5.500C11 2 4 3 0 8" fill="#0f7cdc"/></svg></button>
  <button class="btn app live now" aria-label="广联达"><svg width="18" height="18"><use href="#app"/></svg></button>
  <div class="tray d-flex align-items-center ms-auto">
    <svg width="11" height="11" class="tray-s"><use href="#sogou"/></svg>
    <svg class="ico tray-p" fill="none" stroke="#eee"><circle cx="8" cy="2.500" r="2"/><circle cx="4" cy="6" r="1.800"/><path d="M1 11.500c0-4 5.500-4 6 0M5.500 5.500C8 4 11.500 5.500 11 8.500"/></svg>
    <svg width="9" height="6" fill="none" stroke="#eee" stroke-width="1.200"><path d="m.5 5.500 4-4 4 4"/></svg>
    <svg width="12" height="10"><path d="M3.500 2.500h7v5h-7z" fill="#eee" stroke="#eee"/><path d="M11.500 4v2M1 0v3M3 0v3M0 3h4v2L2 6v2" stroke="#eee" fill="none"/></svg>
    <svg width="11" height="11" fill="none" stroke="#ddd"><path d="M1 10C1 5 5 1 10 1M4 10c0-3 3-6 6-6M7 10c0-2 1-3 3-3M9 10h1"/></svg>
    <svg width="13" height="11" fill="none" stroke="#eee"><path d="M.5 4h2l3-3v9l-3-3h-2zM7.500 4v3M9 2.500c1 2 1 4 0 6M11 1c2 3 2 6 0 9"/></svg>
    <span class="zh2">中</span>
    <svg width="12" height="12"><use href="#sogou"/></svg>
    <div class="clock"><div>15:50</div><div>2018/9/5</div></div>
    <svg width="13" height="13" fill="none" stroke="#eee"><path d="M.5.500h12v9H8v2.500L5.500 9.500h-5z"/></svg>
  </div>
</footer>

<svg class="mark-over" width="184" height="90" fill="#fff" fill-opacity=".68" stroke="#999" stroke-opacity=".3" stroke-width="1">
  <text x="1" y="56" class="wm">Bai</text>
  <ellipse cx="69" cy="23" rx="6.500" ry="8.500"/><ellipse cx="82" cy="10" rx="6.500" ry="9"/><ellipse cx="98" cy="11" rx="6.500" ry="9" transform="rotate(8 98 11)"/><ellipse cx="108" cy="27" rx="6.500" ry="8.500" transform="rotate(10 108 27)"/>
  <path d="M89 24c8 0 9 8 15 14 7 6 8 20-3 20-7 0-17 0-24 0-11 0-11-14-4-20 7-6 8-14 16-14"/>
  <text x="76" y="51" class="wd" stroke="none">du</text>
  <text x="116" y="55" class="wz">经验</text>
  <text x="1" y="80" class="wu">jingyan.baidu.com</text>
</svg>
<script src="https://cdn.jsdelivr.net/npm/bootstrap@5.3.0/dist/js/bootstrap.bundle.min.js"></script>
</body>
</html>
